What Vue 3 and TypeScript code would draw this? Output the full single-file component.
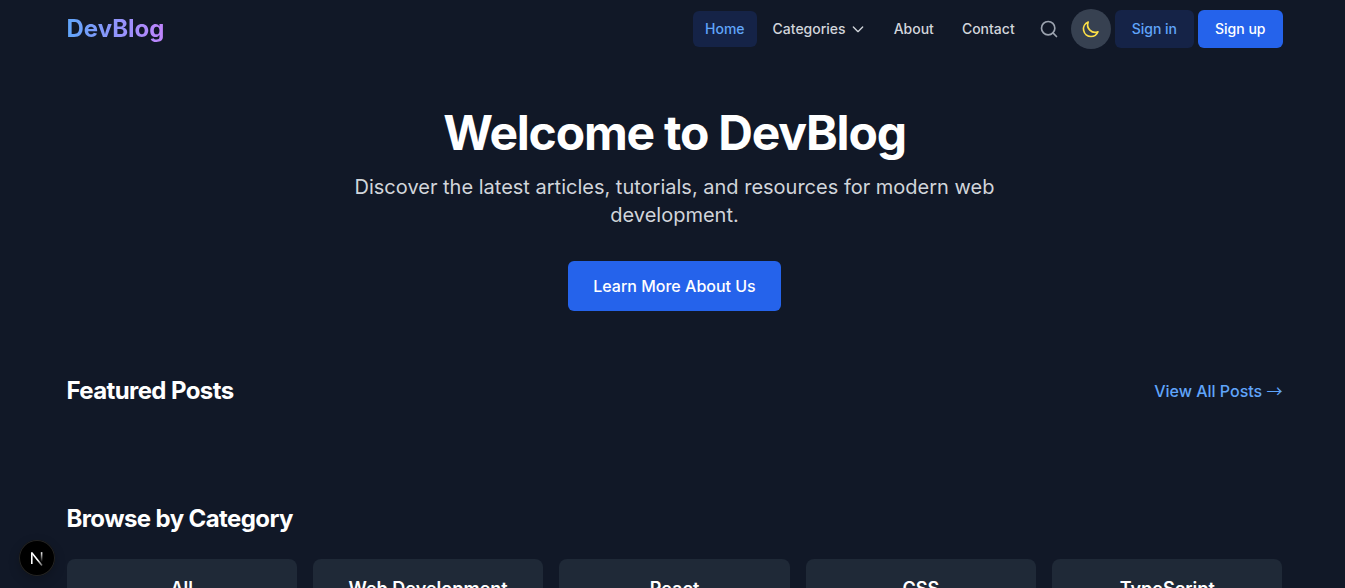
<script setup lang="ts">
interface NavLink {
  label: string
  active?: boolean
  menu?: boolean
}

const navLinks: NavLink[] = [
  { label: 'Home', active: true },
  { label: 'Categories', menu: true },
  { label: 'About' },
  { label: 'Contact' },
]

const categories: string[] = ['All', 'Web Development', 'React', 'CSS', 'TypeScript']
</script>

<template>
  <div class="page">
    <header class="header container">
      <a class="brand" href="#">DevBlog</a>
      <nav class="nav" aria-label="Main">
        <template v-for="link in navLinks" :key="link.label">
          <button v-if="link.menu" class="nav-item" type="button" aria-haspopup="true">
            {{ link.label }}
            <svg class="chevron" viewBox="0 0 24 24" aria-hidden="true">
              <path d="M19 9l-7 7-7-7" />
            </svg>
          </button>
          <a v-else class="nav-item" :class="{ active: link.active }" href="#">{{ link.label }}</a>
        </template>
        <button class="icon-button" type="button" aria-label="Search">
          <svg viewBox="0 0 24 24" aria-hidden="true">
            <circle cx="11" cy="11" r="8" />
            <path d="M21 21l-4.3-4.3" />
          </svg>
        </button>
        <button class="icon-button theme" type="button" aria-label="Toggle theme">
          <svg viewBox="0 0 24 24" aria-hidden="true">
            <path d="M20.354 15.354A9 9 0 018.646 3.646 9.003 9.003 0 0012 21a9.003 9.003 0 008.354-5.646z" />
          </svg>
        </button>
        <a class="auth sign-in" href="#">Sign in</a>
        <a class="auth sign-up" href="#">Sign up</a>
      </nav>
    </header>

    <main class="container">
      <section class="hero">
        <h1>Welcome to DevBlog</h1>
        <p>Discover the latest articles, tutorials, and resources for modern web development.</p>
        <a class="cta" href="#">Learn More About Us</a>
      </section>

      <section class="featured">
        <h2>Featured Posts</h2>
        <a class="view-all" href="#">View All Posts <span class="arrow">→</span></a>
      </section>

      <section class="browse">
        <h2>Browse by Category</h2>
        <div class="cards">
          <a v-for="name in categories" :key="name" class="card" href="#">
            <h3>{{ name }}</h3>
          </a>
        </div>
      </section>
    </main>

    <button class="dev-badge" type="button" aria-label="Open developer tools">
      <svg viewBox="0 0 36 36" aria-hidden="true">
        <defs>
          <linearGradient id="badge-diagonal" x1="19" y1="20" x2="24" y2="26" gradientUnits="userSpaceOnUse">
            <stop offset="0" stop-color="#fff" />
            <stop offset="1" stop-color="#fff" stop-opacity="0.3" />
          </linearGradient>
          <linearGradient id="badge-stem" x1="23" y1="12" x2="23" y2="22" gradientUnits="userSpaceOnUse">
            <stop offset="0" stop-color="#fff" />
            <stop offset="1" stop-color="#fff" stop-opacity="0" />
          </linearGradient>
        </defs>
        <path d="M13 13L23 25.4" stroke="url(#badge-diagonal)" />
        <path d="M12.8 24V12.2" stroke="#fff" />
        <path d="M22.6 12.2v10" stroke="url(#badge-stem)" />
      </svg>
    </button>
  </div>
</template>

<style>
body {
  margin: 0;
  background: #111827;
}
</style>

<style scoped>
.page,
.page * {
  box-sizing: border-box;
}

.page {
  min-height: 100vh;
  padding-left: 4px;
  background: #111827;
  color: #fff;
  font-family: Inter, "Liberation Sans", sans-serif;
  font-size: 16px;
  line-height: 24px;
}

.container {
  max-width: 1280px;
  margin: 0 auto;
  padding: 0 32px;
}

a {
  color: inherit;
  text-decoration: none;
}

button {
  border: 0;
  background: none;
  font: inherit;
  cursor: pointer;
}

h1,
h2,
h3,
p {
  margin: 0;
}

.header {
  display: flex;
  align-items: center;
  justify-content: space-between;
  height: 58px;
}

.brand {
  background: linear-gradient(to right, #60a5fa, #c084fc);
  background-clip: text;
  -webkit-background-clip: text;
  color: transparent;
  font-size: 24px;
  font-weight: 700;
  line-height: 32px;
}

.nav {
  display: flex;
  align-items: center;
  gap: 4px;
  font-size: 14px;
  font-weight: 500;
  line-height: 20px;
}

.nav-item {
  display: flex;
  align-items: center;
  gap: 4px;
  padding: 8px 12px;
  border-radius: 6px;
  color: #d1d5db;
}

.nav-item.active {
  background: #152347;
  color: #60a5fa;
}

svg {
  display: block;
  fill: none;
  stroke: currentColor;
  stroke-width: 2;
  stroke-linecap: round;
  stroke-linejoin: round;
}

.chevron {
  width: 16px;
  height: 16px;
}

.icon-button {
  padding: 8px;
  border-radius: 50%;
  color: #9ca3af;
}

.icon-button svg {
  width: 20px;
  height: 20px;
}

.icon-button.theme {
  padding: 10px;
  background: #374151;
  color: #fde047;
}

.auth {
  padding: 8px 16px;
  border: 1px solid transparent;
  border-radius: 6px;
}

.sign-in {
  background: #152347;
  color: #60a5fa;
}

.sign-up {
  background: #2563eb;
}

.hero {
  display: flex;
  flex-direction: column;
  align-items: center;
  padding: 51px 0 64px;
  text-align: center;
}

h1 {
  font-size: 48px;
  font-weight: 700;
  line-height: 48px;
  letter-spacing: -0.025em;
}

.hero p {
  max-width: 672px;
  margin-top: 16px;
  color: #d1d5db;
  font-size: 20px;
  line-height: 28px;
}

.cta {
  margin-top: 32px;
  padding: 13px 25px;
  border-radius: 6px;
  background: #2563eb;
  font-weight: 500;
}

.featured {
  display: flex;
  align-items: center;
  justify-content: space-between;
}

h2 {
  font-size: 24px;
  font-weight: 700;
  line-height: 32px;
  letter-spacing: -0.025em;
}

.view-all {
  color: #60a5fa;
  font-weight: 500;
}

.arrow {
  font-family: "Noto Sans CJK JP", sans-serif;
  font-weight: 400;
  line-height: 1;
}

.browse {
  padding: 96px 0 64px;
}

.cards {
  display: grid;
  grid-template-columns: repeat(5, 1fr);
  gap: 16px;
  margin-top: 24px;
}

.card {
  padding: 16px;
  border-radius: 8px;
  background: #1f2937;
  text-align: center;
}

h3 {
  font-size: 18px;
  font-weight: 600;
  line-height: 28px;
}

.dev-badge {
  position: fixed;
  bottom: 12px;
  left: 19px;
  width: 36px;
  height: 36px;
  padding: 0;
  border-radius: 50%;
  background: #000;
  box-shadow: inset 0 0 0 1px #242424, 0 4px 12px rgba(0, 0, 0, 0.2);
}

.dev-badge svg {
  width: 36px;
  height: 36px;
  stroke-width: 1.6;
  stroke-linecap: butt;
  stroke-linejoin: miter;
}
</style>
